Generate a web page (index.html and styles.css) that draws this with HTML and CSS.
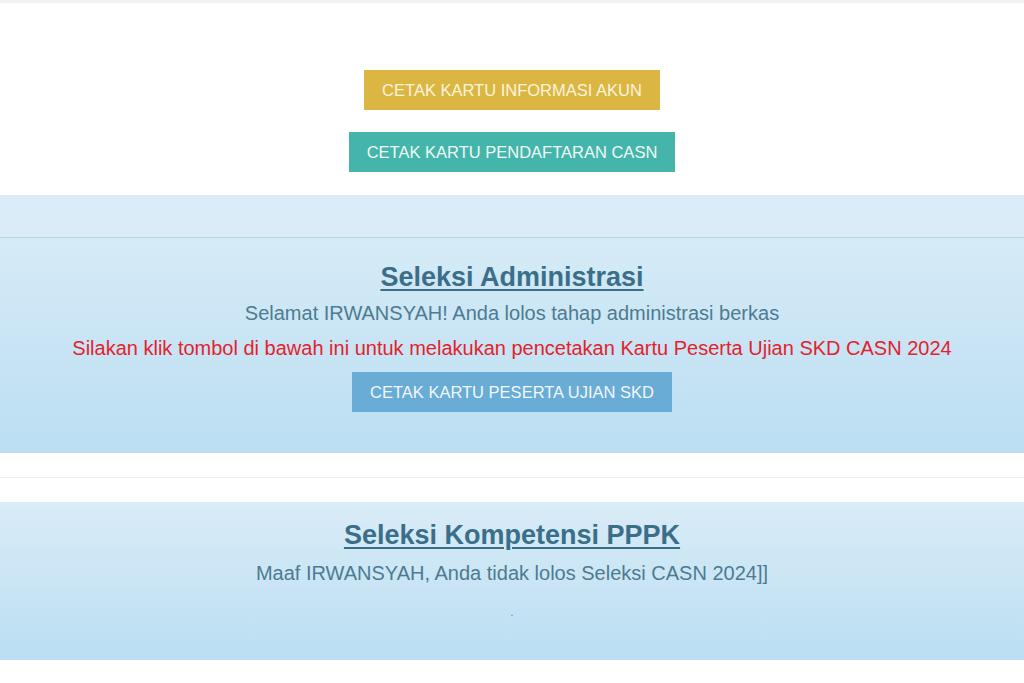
FILE: index.html
```html
<!DOCTYPE html>
<html>
<head>
<meta charset="utf-8">
<link rel="stylesheet" href="styles.css">
</head>
<body>
<div class="topline"></div>
<section class="actions">
  <a class="btn btn-yellow">CETAK KARTU INFORMASI AKUN</a>
  <a class="btn btn-teal">CETAK KARTU PENDAFTARAN CASN</a>
</section>
<section class="panel">
  <div class="panel-head"></div>
  <div class="panel-body body-admin">
    <h2 class="title">Seleksi Administrasi</h2>
    <p class="msg">Selamat IRWANSYAH! Anda lolos tahap administrasi berkas</p>
    <p class="msg red">Silakan klik tombol di bawah ini untuk melakukan pencetakan Kartu Peserta Ujian SKD CASN 2024</p>
    <a class="btn btn-blue">CETAK KARTU PESERTA UJIAN SKD</a>
  </div>
</section>
<div class="spacer"></div>
<section class="panel panel-two">
  <div class="panel-body body-pppk">
    <h2 class="title">Seleksi Kompetensi PPPK</h2>
    <p class="msg">Maaf IRWANSYAH, Anda tidak lolos Seleksi CASN 2024]]</p>
    <p class="dot">.</p>
  </div>
</section>
</body>
</html>
```
FILE: styles.css
```css
html, body {
  margin: 0;
  padding: 0;
  background: #ffffff;
  font-family: "Liberation Sans", Arial, sans-serif;
}
.topline {
  height: 3px;
  background: #f1f2f3;
}
.actions {
  display: flex;
  flex-direction: column;
  align-items: center;
  gap: 22px;
  padding-top: 67px;
  height: 125px;
}
.btn {
  display: inline-block;
  height: 40px;
  line-height: 40px;
  padding: 0 18px;
  font-size: 16.5px;
  text-decoration: none;
  box-sizing: border-box;
  white-space: nowrap;
}
.btn-yellow {
  background: #dcb642;
  color: #fbf4dc;
}
.btn-teal {
  background: #45b5ab;
  color: #eefaf8;
}
.btn-blue {
  background: #69acd6;
  color: #f2f8fc;
}
.panel {
  background: linear-gradient(#daedf8, #bcdff2);
}
.panel-head {
  height: 42px;
  border-bottom: 1px solid #b6d6e8;
  background: #d9ecf7;
}
.panel-body {
  display: flex;
  flex-direction: column;
  align-items: center;
  text-align: center;
}
.body-admin {
  height: 215px;
  padding-top: 23px;
  box-sizing: border-box;
  background: linear-gradient(#d6ebf7, #bbdef2);
}
.title {
  margin: 0;
  font-size: 27px;
  font-weight: bold;
  color: #3b6f89;
  text-decoration: underline;
  text-decoration-thickness: 2px;
  text-underline-offset: 3px;
  line-height: 32px;
}
.msg {
  margin: 5px 0 0;
  font-size: 20px;
  line-height: 30px;
  color: #4d7b91;
  white-space: nowrap;
}
.msg.red {
  margin-top: 5px;
  color: #e3222c;
}
.body-admin .btn-blue {
  margin-top: 9px;
}
.spacer {
  height: 24px;
  border-bottom: 1px solid #eceeef;
  margin-bottom: 24px;
}
.panel-two {
  height: 158px;
  background: linear-gradient(#d9ecf7, #bbdef2);
}
.body-pppk {
  padding-top: 17px;
}
.body-pppk .msg {
  margin-top: 7px;
}
.dot {
  margin: 17px 0 0;
  font-size: 12px;
  color: #6f8c9a;
  line-height: 14px;
}
```
